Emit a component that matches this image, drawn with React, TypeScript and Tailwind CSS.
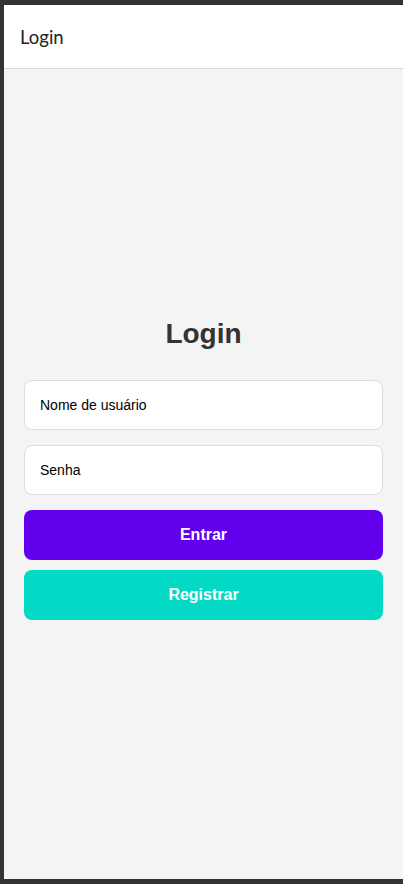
import React from "react";

export default function App() {
  return (
    <div className="w-[403px] h-[884px] bg-[#333333] pl-[4px] pt-[5px] pb-[5px] flex flex-col">
      <div className="h-[64px] shrink-0 bg-white border-b border-[#d8d8d8] flex items-center px-4 pt-[1px]">
        <span className="text-[18.5px] text-[#222222] leading-none" style={{ fontFamily: 'Lato, sans-serif' }}>
          Login
        </span>
      </div>
      <div className="flex-1 bg-[#f4f4f4] flex flex-col justify-center px-5 pb-[10px]" style={{ fontFamily: '"Liberation Sans", Arial, sans-serif' }}>
        <h1 className="text-[28px] leading-[32px] font-bold text-[#333333] text-center mb-[30px]">Login</h1>
        <div className="h-[50px] bg-white border border-[#dddddd] rounded-lg flex items-center pl-[15px] pr-4 text-[14px] text-black mb-[15px]">
          Nome de usuário
        </div>
        <div className="h-[50px] bg-white border border-[#dddddd] rounded-lg flex items-center pl-[15px] pr-4 text-[14px] text-black mb-[15px]">
          Senha
        </div>
        <button className="h-[50px] bg-[#6200ee] rounded-lg flex items-center justify-center text-white font-bold text-[16px] mb-[10px]">
          Entrar
        </button>
        <button className="h-[50px] bg-[#03dac6] rounded-lg flex items-center justify-center text-white font-bold text-[16px]">
          Registrar
        </button>
      </div>
    </div>
  );
}
